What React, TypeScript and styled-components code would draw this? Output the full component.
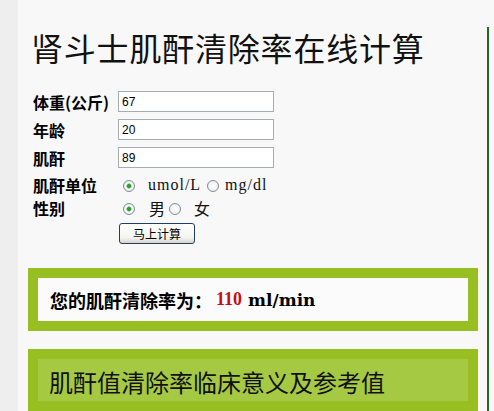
import React, { useState } from "react";
import styled, { createGlobalStyle } from "styled-components";

const GlobalStyle = createGlobalStyle`
  html, body {
    margin: 0;
    padding: 0;
    background: #eeeeee;
  }
  body {
    font-family: "Liberation Serif", "Noto Sans CJK SC", serif;
    color: #000;
  }
`;

const Page = styled.div`
  display: flex;
  min-height: 411px;
  background: #eeeeee;
`;

const Sheet = styled.div`
  flex: 1;
  margin-left: 18px;
  padding-top: 20px;
  background: #f8f8f8;
`;

const Column = styled.div`
  width: 471px;
  min-height: 400px;
  padding-left: 10px;
  border-right: 2px solid #1f6a1c;
  box-sizing: border-box;
`;

const Title = styled.h1`
  margin: 7px 0 0 3px;
  font-family: "Noto Sans CJK SC", sans-serif;
  font-size: 32px;
  line-height: 40px;
  font-weight: 400;
  color: #111;
  letter-spacing: 0.8px;
`;

const Form = styled.form`
  display: flex;
  flex-direction: column;
  margin-top: 24px;
  padding-left: 5px;
`;

const Row = styled.div<{ $h: number; $after: number }>`
  display: flex;
  align-items: center;
  height: ${(p) => p.$h}px;
  margin-bottom: ${(p) => p.$after}px;
`;

const Label = styled.label`
  width: 85px;
  flex-shrink: 0;
  font-family: "Noto Sans CJK SC", sans-serif;
  font-size: 16px;
  font-weight: 700;
  line-height: 20px;
  white-space: nowrap;
`;

const TextInput = styled.input`
  width: 156px;
  height: 21px;
  box-sizing: border-box;
  border: 1px solid #a5acb2;
  background: #fff;
  padding: 1px 3px 0;
  font-family: "Liberation Sans", Arial, sans-serif;
  font-size: 12px;
  color: #000;
  outline: none;
`;

const Radio = styled.input.attrs({ type: "radio" })<{ $lead: number; $gap: number }>`
  appearance: none;
  -webkit-appearance: none;
  width: 12px;
  height: 12px;
  margin: 1px ${(p) => p.$gap}px 0 ${(p) => p.$lead}px;
  border: 1px solid #7b8fa1;
  border-radius: 50%;
  box-sizing: border-box;
  background: radial-gradient(circle at 50% 50%, #ffffff 0, #f2f2ee 60%, #dcdcd4 100%);
  flex-shrink: 0;

  &:checked {
    background: radial-gradient(circle at 50% 50%, #2e9f2e 0 1.6px, #8fd38f 2.4px, #ffffff 3px, #f2f2ee 60%, #dcdcd4 100%);
  }
`;

const Choice = styled.span<{ $cjk?: boolean }>`
  font-family: ${(p) =>
    p.$cjk ? `"Noto Sans CJK SC", sans-serif` : `"Liberation Serif", serif`};
  font-size: 16px;
  letter-spacing: ${(p) => (p.$cjk ? 0 : 1)}px;
  line-height: 20px;
  color: #111;
`;

const Submit = styled.button`
  margin-left: 86px;
  width: 76px;
  height: 21px;
  padding: 0;
  border: 1px solid #1f3e6b;
  border-radius: 3px;
  background: linear-gradient(to bottom, #ffffff 0%, #f4f4f0 70%, #d8d4ca 100%);
  font-family: "Noto Sans CJK SC", sans-serif;
  font-size: 12px;
  line-height: 19px;
  color: #000;
`;

const GreenBox = styled.section<{ $top: number }>`
  width: 450px;
  margin-top: ${(p) => p.$top}px;
  border: 10px solid #97bf22;
  box-sizing: border-box;
  background: #97bf22;
`;

const ResultBody = styled.div`
  height: 43px;
  padding-left: 12px;
  display: flex;
  align-items: center;
  background: #fbfbfb;
  font-size: 18px;
  font-weight: 700;
`;

const ResultLabel = styled.span`
  font-family: "Noto Sans CJK SC", sans-serif;
  margin-right: 4px;
`;

const ResultValue = styled.span`
  font-family: "Liberation Serif", serif;
  color: #c4100f;
  margin-right: 6px;
`;

const ResultUnit = styled.span`
  font-family: "DejaVu Serif", serif;
  font-size: 17px;
`;

const Heading = styled.h2`
  margin: 0;
  padding: 6px 0 0 11px;
  height: 42px;
  box-sizing: border-box;
  background: #a6c944;
  font-family: "Noto Sans CJK SC", sans-serif;
  font-size: 24px;
  line-height: 34px;
  font-weight: 400;
  color: #111;
`;

export default function App() {
  const [weight, setWeight] = useState("67");
  const [age, setAge] = useState("20");
  const [scr, setScr] = useState("89");
  const [unit, setUnit] = useState("umol");
  const [sex, setSex] = useState("m");

  return (
    <Page>
      <GlobalStyle />
      <Sheet>
        <Column>
          <Title>肾斗士肌酐清除率在线计算</Title>
          <Form onSubmit={(e) => e.preventDefault()}>
            <Row $h={21} $after={7}>
              <Label>体重(公斤)</Label>
              <TextInput value={weight} onChange={(e) => setWeight(e.target.value)} />
            </Row>
            <Row $h={21} $after={7}>
              <Label>年龄</Label>
              <TextInput value={age} onChange={(e) => setAge(e.target.value)} />
            </Row>
            <Row $h={21} $after={7}>
              <Label>肌酐</Label>
              <TextInput value={scr} onChange={(e) => setScr(e.target.value)} />
            </Row>
            <Row $h={20} $after={3}>
              <Label>肌酐单位</Label>
              <Radio
                $lead={5}
                $gap={13}
                name="unit"
                checked={unit === "umol"}
                onChange={() => setUnit("umol")}
              />
              <Choice>umol/L</Choice>
              <Radio
                $lead={6}
                $gap={6}
                name="unit"
                checked={unit === "mg"}
                onChange={() => setUnit("mg")}
              />
              <Choice>mg/dl</Choice>
            </Row>
            <Row $h={20} $after={5}>
              <Label>性别</Label>
              <Radio
                $lead={5}
                $gap={14}
                name="sex"
                checked={sex === "m"}
                onChange={() => setSex("m")}
              />
              <Choice $cjk>男</Choice>
              <Radio
                $lead={4}
                $gap={13}
                name="sex"
                checked={sex === "f"}
                onChange={() => setSex("f")}
              />
              <Choice $cjk>女</Choice>
            </Row>
            <Row $h={21} $after={0}>
              <Submit type="submit">马上计算</Submit>
            </Row>
          </Form>
          <GreenBox $top={24}>
            <ResultBody>
              <ResultLabel>您的肌酐清除率为：</ResultLabel>
              <ResultValue>110</ResultValue>
              <ResultUnit>ml/min</ResultUnit>
            </ResultBody>
          </GreenBox>
          <GreenBox $top={18}>
            <Heading>肌酐值清除率临床意义及参考值</Heading>
          </GreenBox>
        </Column>
      </Sheet>
    </Page>
  );
}
